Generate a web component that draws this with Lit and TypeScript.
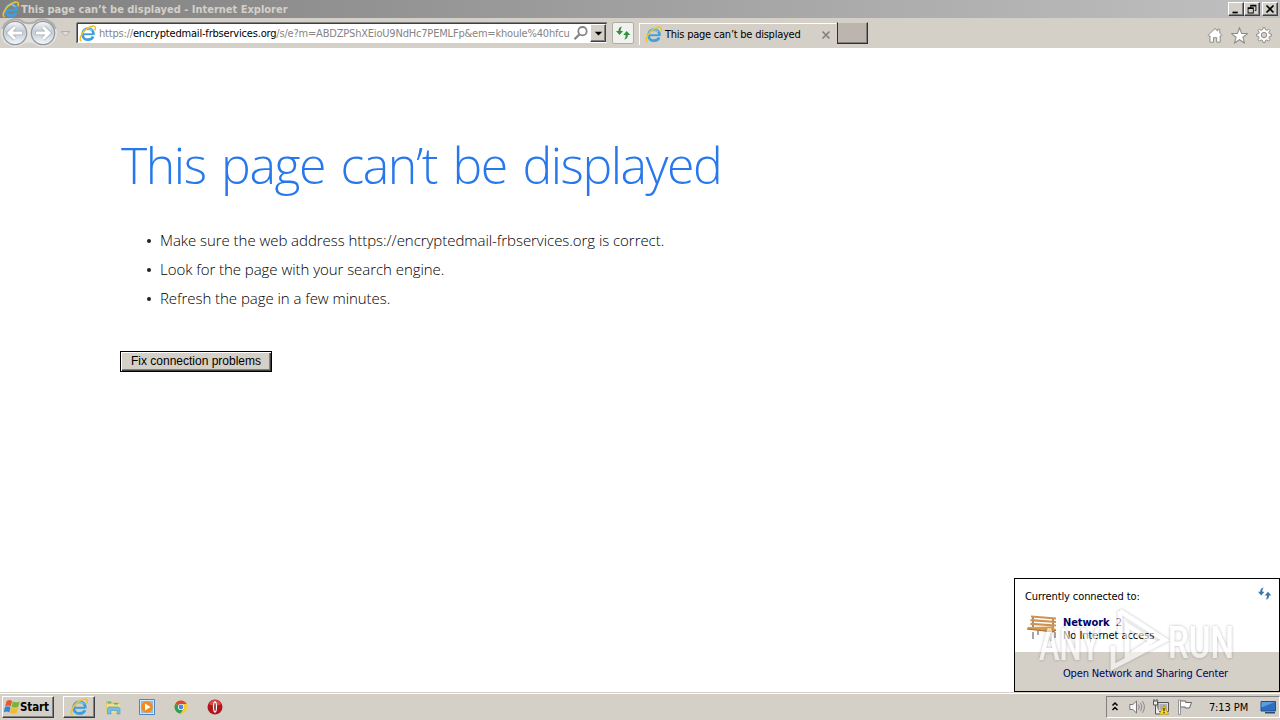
import { LitElement, css, html, svg, nothing } from 'lit';
import { customElement, property } from 'lit/decorators.js';

const ICONS = {
  ie: svg`
    <path d="M4 8.700h9.200" stroke="#3d9fe0" stroke-width="1.800" fill="none"/>
    <path d="M13.600 9.300c.3-4-2-5.900-5.100-5.900-3 0-5.200 2.200-5.200 5.200 0 3.200 2.200 5.200 5.300 5.200 2.300 0 4-1.100 4.700-2.900" stroke="#3d9fe0" stroke-width="2.500" fill="none"/>
    <path d="M3.800 7.200c.8-2.200 2.500-3.600 4.700-3.600 1.800 0 3.200.7 4 2" stroke="#8fd3f6" stroke-width="1" fill="none"/>
    <path d="M2.300 15C-.6 13.400 2.600 7 7.300 3.500 11 .7 15.200 0 15.400 2.600c.1.800-.1 1.600-.6 2.500" stroke="#f0c22b" stroke-width="1.500" fill="none"/>`,
  home: svg`<path d="M1 8.300 8 1.500l2.600 2.500V2.300h2.200v3.800L15 8.300l-1 1.100-.8-.7v6.500H9.700v-4.500H6.500v4.500H3V8.700l-.9.800z" fill="#fff" stroke="#8f8c88"/>`,
  star: svg`<path d="m8 .8 2 5.200 5.500.2-4.300 3.500 1.500 5.400L8 12l-4.700 3.100 1.500-5.400L.5 6.200 6 6z" fill="#fff" stroke="#8f8c88"/>`,
  gear: svg`
    <path d="m7 .7 2 0 .4 2 1.500.6 1.700-1.200 1.400 1.400-1.200 1.700.6 1.500 2 .4v2l-2 .4-.6 1.500 1.200 1.700-1.400 1.400-1.700-1.200-1.500.6-.4 2H7l-.4-2-1.500-.6-1.700 1.200L2 12.700 3.200 11l-.6-1.500-2-.4v-2l2-.4.6-1.500L2 3.500l1.400-1.400 1.700 1.200 1.500-.6z" fill="#fff" stroke="#8f8c88"/>
    <circle cx="8" cy="8.100" r="2.700" fill="#d4d0c8" stroke="#8f8c88"/>`,
  search: svg`
    <circle cx="9.500" cy="6.200" r="4.200" fill="none" stroke="#858585" stroke-width="1.800"/>
    <path d="m6.500 9.200-5 5" stroke="#858585" stroke-width="2.300"/>`,
  refresh: svg`
    <path d="M7.200 1.500C4.800 1.800 3.400 3.200 3.400 6H1L4.500 10 8 6H5.700C5.700 4.300 6 2.700 7.200 1.500z" fill="currentColor"/>
    <path d="M9.200 14.500c2.400-.3 3.700-1.700 3.700-4.500H15.300L11.700 6 8.200 10h2.400c0 1.700-.2 3.300-1.400 4.500z" fill="currentColor"/>`,
  windows: svg`
    <path d="M2.600 2C4.500.7 6.200.9 8.100 2.100L6.800 7.300C5 6.200 3.200 6.100 1.200 7.200z" fill="#e8582a"/>
    <path d="M8.900 2.500c2.200 1.200 4.600 1 6.800-.1L14.300 7.700c-2.200 1.100-4.600 1.200-6.700 0z" fill="#77b43c"/>
    <path d="M1 8.100c2-1.100 3.700-1 5.600.1l-1.300 5.200C3.500 12.300 1.800 12.200-.3 13.300z" fill="#3a83d3"/>
    <path d="M7.400 8.600c2.100 1.200 4.500 1.100 6.700.1l-1.400 5.200c-2.200 1.100-4.600 1-6.700-.1z" fill="#f3bd25"/>`,
  folder: svg`
    <path d="M1 2h5l1 1.500h7.500V13H1z" fill="#dcbf5c"/>
    <path d="M1.500 4.800h13.500V14H1.500z" fill="#f3dd85"/>
    <path d="M3 3.500h3M9 4.800h4" stroke="#5cb56a" stroke-width="1.500"/>
    <path d="M2.500 15V10C2.500 8.500 3.500 8 4.500 8h8c1.300 0 2.500.8 2.500 2v5h-3v-3.500H6V15z" fill="#76bde6" stroke="#4c97c2" stroke-width=".6"/>`,
  player: svg`
    <path d="M.5.500h15v15H.5z" fill="#d3e7f8" stroke="#4c87c2"/>
    <path d="M2 2h12v12H2z" fill="#8dbde7"/>
    <circle cx="8" cy="8" r="5.800" fill="#f28a1c"/>
    <path d="m6 4.600 5.600 3.400L6 11.400z" fill="#fff"/>`,
  chrome: svg`
    <circle cx="8" cy="8" r="6.500" fill="#fbcb2c"/>
    <path d="M8 8 2.400 4.700A6.500 6.500 0 0 1 13.700 5H8z" fill="#df4535"/>
    <path d="M8 8 2.400 4.700A6.500 6.500 0 0 0 7.500 14.500L10.500 10z" fill="#2f9e52"/>
    <circle cx="8" cy="8" r="3.100" fill="#fff"/>
    <circle cx="8" cy="8" r="2.400" fill="#4688ee"/>`,
  opera: svg`
    <circle cx="8" cy="8" r="7.500" fill="#b0161c"/>
    <path d="M2 5a6.500 6.500 0 0 1 12 0c-2 2-10 2-12 0z" fill="#d9494a"/>
    <ellipse cx="8" cy="8" rx="1.400" ry="5" fill="#7b0a10" stroke="#fff" stroke-width="1.300"/>`,
  speaker: svg`
    <path d="M.8 5.500h3L7.500 2v12l-3.700-3.500h-3z" fill="#f5f5f5" stroke="#777"/>
    <path d="M9.500 5.500q1.600 2.500 0 5M11.500 3.800q2.700 4.200 0 8.400M13.500 2.200q3.800 5.800 0 11.600" fill="none" stroke="#888"/>`,
  network: svg`
    <path d="M5 3.500h10.500v9H5z" fill="#ddd" stroke="#555"/>
    <path d="M6.500 5h7.500v6H6.500z" fill="#b0b0b0"/>
    <path d="M1 0v2M4 0v2M.5 2h4v4h-4zM2.500 6v9h5" fill="#eee" stroke="#555"/>
    <path d="m11 6.500 4.700 8.700H6.300z" fill="#ffdc22" stroke="#b48c00" stroke-width=".7"/>
    <path d="M11 9v3.300M11 13v1.200" stroke="#222" stroke-width="1.200"/>`,
  flag: svg`
    <path d="M3.500 2h5.200v1.500h5.800L12.500 9H8.200V8H3.500z" fill="#fff" stroke="#666"/>
    <path d="M1.500 1v14.500h2V1z" fill="#f5f5f5" stroke="#777" stroke-width=".7"/>`,
  desktop: svg`
    <path d="M1 2.500h14.500v9.500H1z" fill="#2d6fbe" stroke="#1d4f91"/>
    <path d="M1.500 3h13.500L1.500 8.500z" fill="#5c9be0"/>
    <path d="M5 13h10v1.500H5z" fill="#254c79"/>`,
  chevrons: svg`<path d="m5.500 6.500 2.500-2.500 2.500 2.500M5.500 11l2.500-2.500 2.500 2.500" fill="none" stroke="#000" stroke-width="1.500"/>`,
  minimize: svg`<path d="M4 11h6v2H4z"/>`,
  restore: svg`<path d="M6 3h7v7h-2V9h1V5H7v1H6zM3 6h7v7H3zM4 8v4h5V8z" fill-rule="evenodd"/>`,
  close: svg`<path d="m4 4 8 8M12 4l-8 8" stroke="currentColor" stroke-width="2"/>`,
  caret: svg`<path d="M4 6h8l-4 4z" fill="currentColor"/>`,
  history: svg`<path d="M3.500 6h9L8 10.500z" fill="#e6e3de" stroke="#aaa6a0"/>`,
};

@customElement('ui-icon')
export class UiIcon extends LitElement {
  @property() name = 'ie';
  @property({ type: Number }) size = 16;

  static styles = css`
    :host { display: block; flex: none; }
    svg { display: block; }
  `;

  render() {
    return html`<svg width=${this.size} height=${this.size} viewBox="0 0 16 16">${ICONS[this.name] ?? nothing}</svg>`;
  }
}

@customElement('nav-buttons')
export class NavButtons extends LitElement {
  static styles = css`
    :host { display: block; flex: none; }
    svg { display: block; }
  `;

  render() {
    return html`
      <svg width="58" height="30" viewBox="0 0 58 30">
        <defs>
          <linearGradient id="disc" x2="0" y2="1">
            <stop offset="0" stop-color="#f6f8fa"/>
            <stop offset=".45" stop-color="#c3cbd3"/>
            <stop offset="1" stop-color="#f2faff"/>
          </linearGradient>
        </defs>
        <path d="M1 15A14 14 0 0 1 24 4.500q5 2 10 0A14 14 0 0 1 57 15a14 14 0 0 1-23 10.500q-5-2-10 0A14 14 0 0 1 1 15z" fill="#e4e3df"/>
        <path d="M2.500 11A13.500 13.500 0 0 1 24 4.500q5 1.500 10 0a13.500 13.500 0 0 1 21.500 6.500" fill="none" stroke="#b1aeaa" stroke-width="2"/>
        ${[15, 43].map((x) => svg`<circle cx=${x} cy="15" r="11.700" fill="url(#disc)" stroke="#8f979f" stroke-width="1.200"/>`)}
        <path d="M22.500 15H9.500M15 9l-6 6 6 6" fill="none" stroke="#a3abb4" stroke-width="4.400"/>
        <path d="M22 15H9.500M15 9l-6 6 6 6" fill="none" stroke="#fff" stroke-width="3"/>
        <path d="M35.500 15h13M43 9l6 6-6 6" fill="none" stroke="#a3abb4" stroke-width="4.400"/>
        <path d="M36 15h12.500M43 9l6 6-6 6" fill="none" stroke="#fff" stroke-width="3"/>
      </svg>
    `;
  }
}

@customElement('network-flyout')
export class NetworkFlyout extends LitElement {
  static styles = css`
    :host {
      display: flex;
      flex-direction: column;
      box-sizing: border-box;
      width: 266px;
      height: 114px;
      border: 1px solid #000;
      background: #fff;
      color: #000;
      font-size: 11px;
      line-height: 13px;
      white-space: nowrap;
    }
    .status { flex: 1; padding: 7px 7px 0 10px; }
    .top { display: flex; justify-content: space-between; }
    .caption { padding-top: 4px; letter-spacing: -0.1px; }
    .sync { color: #3a77ab; }
    .current { display: flex; gap: 6px; padding-top: 12px; }
    .bench { display: block; }
    .name { padding-top: 1px; color: #000066; font-weight: 700; letter-spacing: -0.1px; }
    .number { font-weight: 400; margin-left: 3px; }
    .access { letter-spacing: -0.05px; }
    .footer {
      display: flex;
      align-items: center;
      height: 39px;
      padding: 4px 0 0 48px;
      box-sizing: border-box;
      background: #d4d0c8;
      color: #000066;
    }
    .link { letter-spacing: -0.17px; }
    .watermark { position: absolute; left: 20px; top: 26px; }
  `;

  render() {
    return html`
      <div class="status">
        <div class="top">
          <span class="caption">Currently connected to:</span>
          <ui-icon class="sync" name="refresh" size="15"></ui-icon>
        </div>
        <div class="current">
          <svg class="bench" width="32" height="27" viewBox="0 0 32 27">
            <path d="M8 1v11M28 3v11" stroke="#8b6a45" stroke-width="1.500"/>
            <path d="M8 17v7M13 16v4M26 18v8M30 17v6" stroke="#8a8a8e" stroke-width="1.500"/>
            <path d="M6 1.500l25 2M5.500 5.200l25.500 1.800M5.500 8.800l25.500 1.700" stroke="#cf9350" stroke-width="2.200"/>
            <path d="M3 12l24-.5 4 3-3 2.500-26-3z" fill="#d99a4c"/>
            <path d="M2 14l26 3 3-2" fill="none" stroke="#a8662a" stroke-width="1.200"/>
          </svg>
          <div>
            <div class="name">Network <span class="number">2</span></div>
            <div class="access">No Internet access</div>
          </div>
        </div>
      </div>
      <div class="footer"><span class="link">Open Network and Sharing Center</span></div>
      <svg class="watermark" width="210" height="66" viewBox="0 0 210 66">
        <defs>
          <filter id="glow" x="-10%" y="-10%" width="120%" height="120%">
            <feDropShadow dx="0" dy="0" stdDeviation="1.400" flood-color="#444" flood-opacity=".65"/>
          </filter>
        </defs>
        <g filter="url(#glow)" opacity=".6" fill="#fff" font-family="Roboto, sans-serif" font-size="45" font-weight="500">
          <text x="4" y="55" textLength="61" lengthAdjust="spacingAndGlyphs">ANY</text>
          <text x="133" y="53" textLength="66" lengthAdjust="spacingAndGlyphs">RUN</text>
          <path d="M85 6l45 29-52 27V41M85 6v22M92 20v32l25-16z" fill="none" stroke="#fff" stroke-width="4.500"/>
        </g>
      </svg>
    `;
  }
}

@customElement('app-root')
export class AppRoot extends LitElement {
  static styles = css`
    :host {
      --face: #d4d0c8;
      --ui-font: 'DejaVu Sans Condensed', 'DejaVu Sans', sans-serif;
      position: relative;
      display: flex;
      flex-direction: column;
      width: 1280px;
      height: 720px;
      overflow: hidden;
      background: #fff;
      font-family: var(--ui-font);
      font-size: 11px;
      line-height: 13px;
      color: #000;
      white-space: nowrap;
    }

    .titlebar {
      display: flex;
      align-items: center;
      box-sizing: border-box;
      height: 18px;
      padding: 0 2px;
      background: linear-gradient(90deg, #808080, #c0c0c0);
      color: var(--face);
      font-weight: 700;
    }
    .title { flex: 1; margin-left: 2px; }
    .window-buttons { display: flex; }
    .window-button {
      display: flex;
      align-items: center;
      justify-content: center;
      box-sizing: border-box;
      width: 16px;
      height: 14px;
      background: var(--face);
      border: 1px solid;
      border-color: #fff #404040 #404040 #fff;
      box-shadow: inset -1px -1px #808080;
      color: #000;
    }
    .window-button:last-child { margin-left: 2px; }

    .toolbar {
      display: flex;
      align-items: flex-start;
      box-sizing: border-box;
      height: 30px;
      background: var(--face);
    }
    .history { margin: 8px 4px 0 0; }
    .address {
      display: flex;
      align-items: center;
      box-sizing: border-box;
      width: 530px;
      height: 20px;
      margin-top: 5px;
      padding-left: 1px;
      background: #fff;
      border: 1px solid;
      border-color: #404040 var(--face) #fff #404040;
      box-shadow: 0 -1px #808080, -1px 0 #808080;
    }
    .url {
      flex: 1;
      margin-left: 3px;
      padding-top: 1px;
      color: #858585;
      letter-spacing: -0.19px;
    }
    .host { color: #000; }
    .drop {
      display: flex;
      align-items: center;
      justify-content: center;
      box-sizing: border-box;
      width: 16px;
      height: 18px;
      margin-left: 1px;
      background: var(--face);
      border: 1px solid;
      border-color: #fff #404040 #404040 #fff;
      box-shadow: inset -1px -1px #808080;
    }
    .reload {
      display: flex;
      align-items: center;
      justify-content: center;
      box-sizing: border-box;
      width: 22px;
      height: 22px;
      margin: 4px 0 0 5px;
      background: #f1f1ef;
      border: 1px solid #b0aca6;
      border-radius: 2px;
      color: #2d9339;
    }
    .tab {
      display: flex;
      align-items: center;
      box-sizing: border-box;
      width: 197px;
      height: 22px;
      margin: 5px 0 0 5px;
      padding: 0 3px 0 5px;
      border: 1px solid #fff;
      border-width: 1px 0 0 1px;
    }
    .tab-title { flex: 1; margin-left: 3px; letter-spacing: -0.24px; }
    .tab-close { color: #85817c; }
    .new-tab {
      box-sizing: border-box;
      width: 31px;
      height: 22px;
      margin: 4px 0 0 1px;
      background: #bbb5ae;
      border: 1px solid #303030;
      border-top-color: var(--face);
      box-shadow: inset -1px -1px #808080;
    }
    .commands { display: flex; gap: 8px; margin: 9px 8px 0 auto; }

    .page { flex: 1; padding: 78px 120px 0; font-family: 'Open Sans', 'Noto Sans', sans-serif; }
    .heading {
      margin: 0 0 0 1px;
      color: #2778ec;
      font-size: 50px;
      font-weight: 300;
      line-height: 78px;
      letter-spacing: -1.45px;
      word-spacing: 4px;
    }
    .tips {
      margin: 22px 0 0;
      padding: 0;
      list-style: none;
      font-size: 15px;
      font-weight: 300;
      line-height: 29px;
      letter-spacing: -0.05px;
    }
    .tip { display: flex; align-items: center; }
    .tip::before {
      content: '';
      width: 4px;
      height: 4px;
      margin: 0 9px 0 27px;
      border-radius: 50%;
      background: #222;
    }
    .fix {
      display: block;
      box-sizing: border-box;
      width: 152px;
      height: 21px;
      margin-top: 38px;
      padding: 0;
      background: var(--face);
      border: 1px solid #000;
      border-radius: 0;
      box-shadow: inset 1px 1px #fff, inset -1px -1px #404040, inset -2px -2px #808080;
      color: #000;
      font: 12px/17px 'Liberation Sans', Arial, sans-serif;
    }

    .taskbar {
      display: flex;
      align-items: flex-start;
      box-sizing: border-box;
      height: 28px;
      padding: 4px 0 0 2px;
      background: linear-gradient(var(--face) 1px, #fff 1px 2px, var(--face) 2px);
    }
    .raised {
      display: flex;
      align-items: center;
      box-sizing: border-box;
      height: 22px;
      border: 1px solid;
      border-color: #fff #404040 #404040 #fff;
      box-shadow: inset -1px -1px #808080;
    }
    .start { width: 52px; padding-left: 1px; font-size: 11.5px; font-weight: 700; letter-spacing: -0.1px; }
    .task { width: 32px; margin-left: 9px; justify-content: center; }
    .pins { display: flex; gap: 18px; margin: 3px 0 0 10px; }
    .tray {
      display: flex;
      align-items: center;
      box-sizing: border-box;
      width: 174px;
      height: 22px;
      margin-left: auto;
      border: 1px solid;
      border-color: #808080 #fff #fff #808080;
    }
    .tray-icons { display: flex; gap: 8px; }
    .more { margin-right: -2px; }
    .clock { margin: 0 auto; padding-left: 4px; letter-spacing: -0.1px; }
    .show-desktop { margin-right: 3px; }

    .flyout { position: absolute; right: 0; top: 578px; }
  `;

  tips = [
    'Make sure the web address https://encryptedmail-frbservices.org is correct.',
    'Look for the page with your search engine.',
    'Refresh the page in a few minutes.',
  ];

  render() {
    return html`
      <header class="titlebar">
        <ui-icon name="ie" size="17"></ui-icon>
        <span class="title">This page can’t be displayed - Internet Explorer</span>
        <div class="window-buttons">
          ${['minimize', 'restore', 'close'].map((name) => html`
            <span class="window-button"><ui-icon name=${name} size="14"></ui-icon></span>`)}
        </div>
      </header>

      <nav class="toolbar">
        <nav-buttons></nav-buttons>
        <ui-icon class="history" name="history" size="15"></ui-icon>
        <div class="address">
          <ui-icon name="ie" size="17"></ui-icon>
          <span class="url">https://<span class="host">encryptedmail-frbservices.org</span>/s/e?m=ABDZPShXEioU9NdHc7PEMLFp&amp;em=khoule%40hfcu</span>
          <ui-icon name="search" size="16"></ui-icon>
          <span class="drop"><ui-icon name="caret" size="15"></ui-icon></span>
        </div>
        <span class="reload"><ui-icon name="refresh"></ui-icon></span>
        <div class="tab">
          <ui-icon name="ie" size="17"></ui-icon>
          <span class="tab-title">This page can’t be displayed</span>
          <ui-icon class="tab-close" name="close" size="14"></ui-icon>
        </div>
        <span class="new-tab"></span>
        <div class="commands">
          <ui-icon name="home"></ui-icon>
          <ui-icon name="star" size="17"></ui-icon>
          <ui-icon name="gear"></ui-icon>
        </div>
      </nav>

      <main class="page">
        <h1 class="heading">This page can’t be displayed</h1>
        <ul class="tips">
          ${this.tips.map((tip) => html`<li class="tip">${tip}</li>`)}
        </ul>
        <button class="fix">Fix connection problems</button>
      </main>

      <footer class="taskbar">
        <div class="raised start">
          <ui-icon name="windows"></ui-icon>
          <span>Start</span>
        </div>
        <div class="raised task"><ui-icon name="ie" size="18"></ui-icon></div>
        <div class="pins">
          ${['folder', 'player', 'chrome', 'opera'].map((name) => html`<ui-icon name=${name}></ui-icon>`)}
        </div>
        <div class="tray">
          <div class="tray-icons">
            <ui-icon class="more" name="chevrons"></ui-icon>
            <ui-icon name="speaker"></ui-icon>
            <ui-icon name="network"></ui-icon>
            <ui-icon name="flag"></ui-icon>
          </div>
          <span class="clock">7:13 PM</span>
          <ui-icon class="show-desktop" name="desktop"></ui-icon>
        </div>
      </footer>

      <network-flyout class="flyout"></network-flyout>
    `;
  }
}
